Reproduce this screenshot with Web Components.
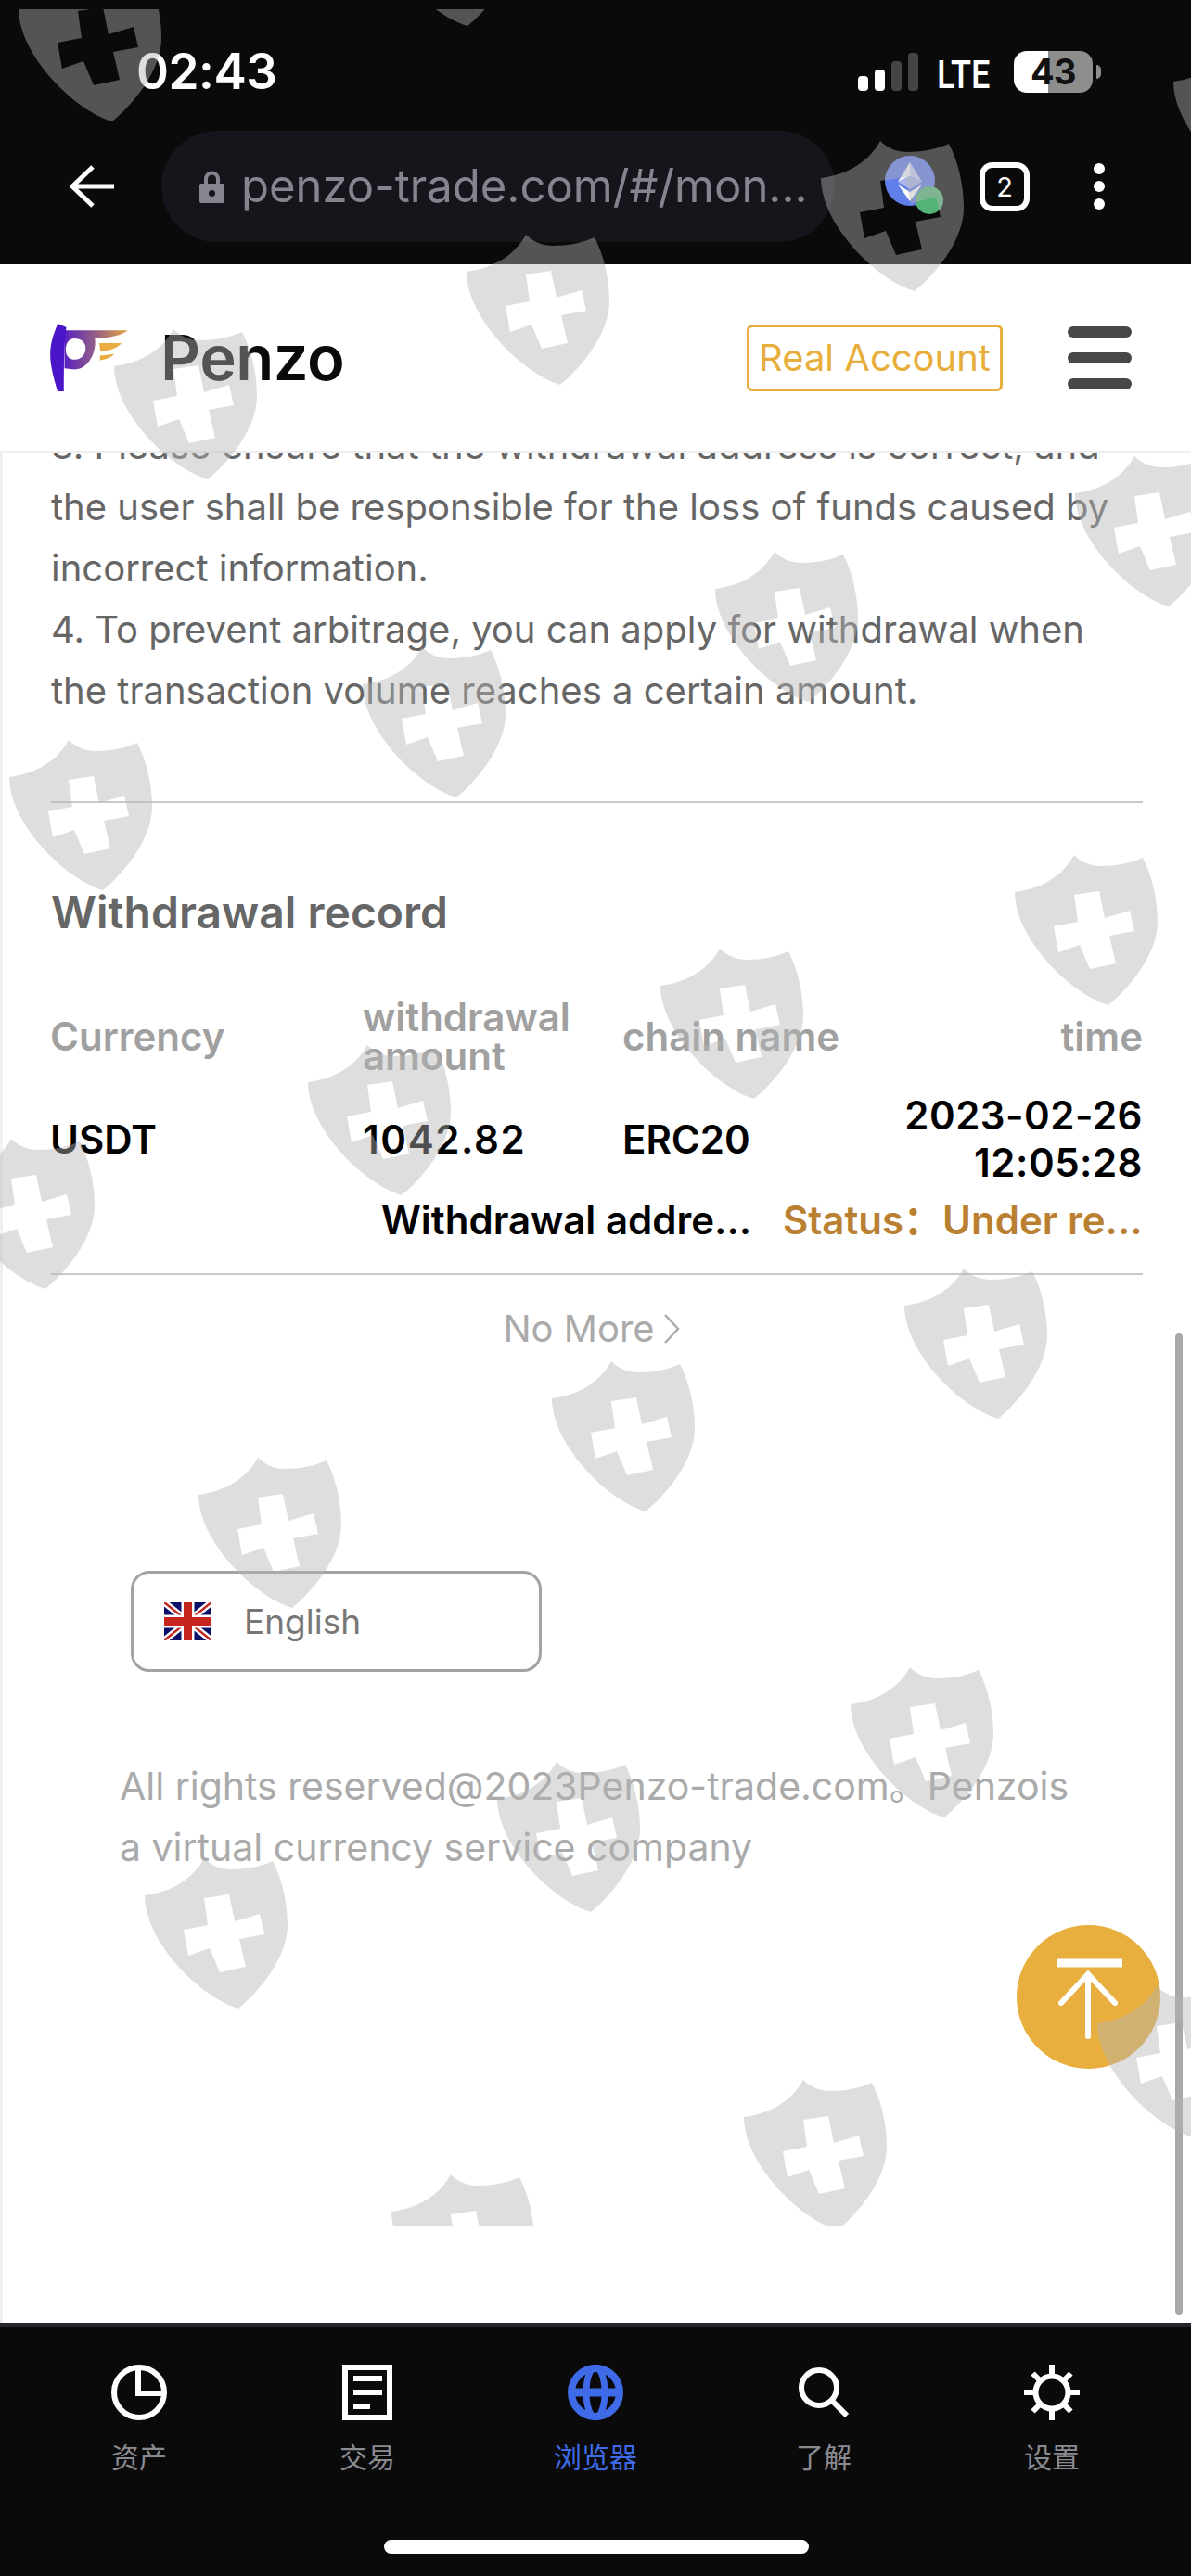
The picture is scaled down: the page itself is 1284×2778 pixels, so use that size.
<!DOCTYPE html>
<html lang="en">
<head>
<meta charset="utf-8">
<title>Penzo</title>
<style>
html,body{margin:0;padding:0;background:#fff;width:1284px;height:2778px;overflow:hidden}
body{font-family:Inter,"Noto Sans CJK SC",sans-serif}
</style>
</head>
<body>
<phone-app>
  <status-bar></status-bar>
  <browser-bar url="penzo-trade.com/#/mon..." tabs="2"></browser-bar>
  <site-header></site-header>
  <page-content>
    <notice-text>3. Please ensure that the withdrawal address is correct, and the user shall be responsible for the loss of funds caused by incorrect information.<br>4. To prevent arbitrage, you can apply for withdrawal when the transaction volume reaches a certain amount.</notice-text>
    <withdrawal-record></withdrawal-record>
    <lang-select>English</lang-select>
    <site-footer>All rights reserved@2023Penzo-trade.com。Penzois<br>a virtual currency service company</site-footer>
  </page-content>
  <tab-bar></tab-bar>
  <back-top></back-top>
  <scroll-thumb></scroll-thumb>
  <watermark-layer></watermark-layer>
</phone-app>
<script>
function def(name, html){
  customElements.define(name, class extends HTMLElement{
    constructor(){super();this.attachShadow({mode:'open'}).innerHTML=typeof html==='function'?html(this):html;}
  });
}
def('phone-app',`<style>:host{display:flex;flex-direction:column;position:relative;width:1284px;height:2778px;overflow:hidden;background:#fff;font-family:Inter,"Noto Sans CJK SC",sans-serif}</style><slot></slot>`);

def('status-bar',`<style>
:host{display:flex;height:141px;flex:none;background:#0a0a0b;color:#fff;position:relative;align-items:flex-start;box-sizing:border-box;padding:49px 0 0 147px}
.time{font:600 53px/56px Inter,sans-serif;letter-spacing:-.5px}
.right{margin-left:auto;display:flex;align-items:flex-end;height:50px;padding-right:106px}
.sig{display:flex;align-items:flex-end;gap:7px;height:41px;margin-bottom:1px}
.sig i{display:block;width:11px;border-radius:4px;background:#fff}
.lte{font:500 43px/44px Roboto,sans-serif;width:62px;margin-left:20px;transform:scaleX(.84);transform-origin:left;white-space:nowrap;margin-bottom:-3px}
.bat{position:relative;width:85px;height:45px;border-radius:14px;margin-left:21px;margin-bottom:-1px;background:linear-gradient(90deg,#fff 0 37px,#8d8d8d 37px);color:#111;font:700 38px/45px Inter,sans-serif;text-align:center;letter-spacing:-.5px}
.nub{position:absolute;right:-9px;top:15px;width:5px;height:15px;border-radius:0 8px 8px 0;background:#8d8d8d}
</style>
<div class="time">02:43</div>
<div class="right">
  <div class="sig"><i style="height:16px"></i><i style="height:23px"></i><i style="height:32px;background:#444"></i><i style="height:41px;background:#444"></i></div>
  <div class="lte">LTE</div>
  <div class="bat">43<span class="nub"></span></div>
</div>`);

def('browser-bar',el=>`<style>
:host{display:flex;flex:none;height:144px;background:#0a0a0b;box-sizing:border-box;padding:0 0 24px 75px;align-items:center}
.back{width:48px;height:46px;flex:none;display:block}
.url{margin-left:51px;width:726px;height:120px;border-radius:60px;background:#15161c;display:flex;align-items:center;padding-left:41px;box-sizing:border-box;color:#84858f;font:400 49px/60px Inter,sans-serif;flex:none;white-space:nowrap}
.url svg{width:27px;height:35px;margin-right:18px;flex:none}
.eth{width:66px;height:66px;margin-left:54px;flex:none;display:block}
.tabs{width:54px;height:53px;box-sizing:border-box;border:6px solid #fff;border-radius:14px;margin-left:36px;color:#fff;font:400 29px/41px Inter,sans-serif;text-align:center;flex:none}
.more{width:12px;height:50px;margin-left:69px;flex:none;display:block}
</style>
<svg class="back" viewBox="0 0 48 46"><path d="M25 2 3 23l22 21M3 23h45" fill="none" stroke="#fff" stroke-width="5"/></svg>
<div class="url"><svg viewBox="0 0 27 35"><path fill="#84858f" d="M5 14V9a8.500 8.500 0 0 1 17 0v5h-4V9a4.500 4.500 0 0 0-9 0v5z"/><path fill="#84858f" fill-rule="evenodd" d="M2 14h23a2 2 0 0 1 2 2v17a2 2 0 0 1-2 2H2a2 2 0 0 1-2-2V16a2 2 0 0 1 2-2zm11.500 7a3.500 3.500 0 1 0 0 7 3.500 3.500 0 0 0 0-7z"/></svg><span>${el.getAttribute('url')}</span></div>
<svg class="eth" viewBox="0 0 66 66"><circle cx="27" cy="27" r="27" fill="#627eea"/><path d="M27 7v15l-13 6z" fill="#f4f5fb"/><path d="M27 7v15l13 6z" fill="#c9d1f4"/><path d="M14 28l13-6 13 6-13 8z" fill="#aab8ee"/><path d="M14 31l13 8 13-8-13 18z" fill="#fff"/><circle cx="48" cy="48" r="15" fill="#54b477"/></svg>
<div class="tabs">${el.getAttribute('tabs')}</div>
<svg class="more" viewBox="0 0 12 50"><circle cx="6" cy="6" r="6" fill="#fff"/><circle cx="6" cy="25" r="6" fill="#fff"/><circle cx="6" cy="44" r="6" fill="#fff"/></svg>`);

def('site-header',`<style>
:host{display:flex;flex:none;height:203px;background:#fff;box-sizing:border-box;padding:0 64px 0 54px;align-items:center;border-bottom:2px solid #eee;color:#0a0a0a}
.logo{width:84px;height:73px;flex:none;display:block}
.name{font:600 67px/78px Inter,sans-serif;margin-left:35px;letter-spacing:-.5px}
.btn{margin-left:auto;width:276px;height:72px;box-sizing:border-box;border:3px solid #e8ae3b;border-radius:6px;color:#e8ae3b;font:400 40px/66px Inter,sans-serif;text-align:center;white-space:nowrap}
.menu{margin-left:70px;width:69px;display:flex;flex-direction:column;gap:16px}
.menu i{display:block;height:12px;border-radius:6px;background:#474747}
</style>
<svg class="logo" viewBox="72 92 250 218"><defs><linearGradient id="g" x1="118" x2="322" y1="0" y2="0" gradientUnits="userSpaceOnUse"><stop offset="0" stop-color="#5a22c0"/><stop offset=".45" stop-color="#8e5a8a"/><stop offset="1" stop-color="#e4a443"/></linearGradient></defs>
<path fill="url(#g)" fill-rule="evenodd" d="M118 114H322C300 132 262 138 216 140C222 192 190 240 150 240L118 236ZM150 140C132 140 122 156 122 176C122 196 134 208 152 208C172 208 186 192 186 170C186 152 170 140 150 140Z"/>
<path fill="#4a14c9" d="M97 92 124 104C116 150 116 250 116 310H96C84 270 72 230 72 190C72 155 84 120 97 92Z"/>
<path fill="#e9ad41" d="M230 155H302C290 170 262 180 234 182ZM232 195 278 190C268 202 250 208 232 210Z"/></svg>
<div class="name">Penzo</div>
<div class="btn">Real Account</div>
<div class="menu"><i></i><i></i><i></i></div>`);

def('page-content',`<style>
:host{display:block;flex:none;height:2017px;overflow:hidden;background:#fff;box-sizing:border-box;border-left:3px solid #f0f0f0}
</style><slot></slot>`);

def('notice-text',`<style>
:host{display:block;margin:-40px 52px 0 52px;font:400 40px/66px Inter,"Noto Sans CJK SC",sans-serif;color:#666;padding-bottom:86px;border-bottom:2px solid #c9c9c9}
</style><slot></slot>`);

def('withdrawal-record',`<style>
:host{display:block;margin:0 52px 0 52px;color:#000;font-family:Inter,"Noto Sans CJK SC",sans-serif}
h2{margin:0;padding-top:91px;font:600 48px/54px Inter,"Noto Sans CJK SC",sans-serif;color:#666}
.grid{display:grid;grid-template-columns:337px 280px 1fr;font:600 42px/42px Inter,"Noto Sans CJK SC",sans-serif;margin:65px 0 0 -1px}
.hd{color:#a0a0a0;align-self:center}
.row{grid-column:1/-1;display:grid;grid-template-columns:337px 280px 1fr;align-items:center;margin-top:17px;line-height:51px}
.more{grid-column:1/-1;display:flex;justify-content:flex-end;margin-top:11px;line-height:51px}
.addr{width:396px;white-space:nowrap}
.st{width:388px;margin-left:37px;color:#b98032;white-space:nowrap}
.line{height:2px;background:#c9c9c9;margin-top:32px}
.nm{display:flex;align-items:center;justify-content:center;gap:9px;color:#aaa;font:400 40px/46px Inter,"Noto Sans CJK SC",sans-serif;margin-top:35px;padding-right:12px}
.nm svg{width:18px;height:32px}
</style>
<h2>Withdrawal record</h2>
<div class="grid">
  <div class="hd">Currency</div><div class="hd">withdrawal<br>amount</div><div class="hd" style="display:flex;justify-content:space-between;grid-column:3"><span>chain name</span><span>time</span></div>
  <div class="row"><div>USDT</div><div style="letter-spacing:1.6px">1042.82</div><div style="display:flex;justify-content:space-between;align-items:center"><span>ERC20</span><span style="text-align:right;letter-spacing:.5px">2023-02-26<br>12:05:28</span></div></div>
  <div class="more"><div class="addr">Withdrawal addre...</div><div class="st">Status：Under re...</div></div>
</div>
<div class="line"></div>
<div class="nm"><span>No More</span><svg viewBox="0 0 18 32"><path d="M2 1l14 15L2 31" fill="none" stroke="#aaa" stroke-width="2.500"/></svg></div>`);

def('lang-select',`<style>
:host{display:flex;align-items:center;width:443px;height:109px;box-sizing:border-box;margin:238px 0 0 138px;border:3px solid #a3a3a3;border-radius:20px;padding-left:33px;color:#777;font:400 37px/46px Inter,sans-serif}
svg{width:51px;height:41px;margin-right:35px;flex:none}
</style>
<svg viewBox="0 0 51 41"><rect width="51" height="41" fill="#0b1166"/><path d="M0 0 51 41M51 0 0 41" stroke="#fff" stroke-width="7"/><path d="M0 0 51 41M51 0 0 41" stroke="#c4261d" stroke-width="2.500"/><path d="M25.500 0v41M0 20.500h51" stroke="#fff" stroke-width="14"/><path d="M25.500 0v41M0 20.500h51" stroke="#c4261d" stroke-width="9"/></svg><slot></slot>`);

def('site-footer',`<style>
:host{display:block;margin:90px 60px 0 126px;font:400 41px/66px Inter,"Noto Sans CJK SC",sans-serif;color:#aaa;white-space:nowrap}
</style><slot></slot>`);

def('tab-item',el=>`<style>
:host{display:flex;flex-direction:column;align-items:center;width:246px;flex:none;color:#8a8b91;font:400 30px/36px "Noto Sans CJK SC",sans-serif}
:host([active]){color:#3f6be8}
.ic{height:60px;display:flex;justify-content:center;margin-bottom:20px}
</style><div class="ic"><slot name="icon"></slot></div><slot></slot>`);

def('tab-bar',`<style>
:host{display:block;position:relative;flex:none;height:273px;background:#0a0a0b;border-top:4px solid #25252d;box-sizing:border-box;padding:41px 27px 0}
.row{display:flex}
.home{position:absolute;left:414px;bottom:24px;width:458px;height:15px;border-radius:8px;background:#fff}
svg{display:block}
</style>
<div class="row">
<tab-item><svg slot="icon" width="60" height="60" viewBox="0 0 60 60" fill="none" stroke="#fff" stroke-width="6"><circle cx="30" cy="30" r="27"/><path d="M29 3v28h28"/></svg>资产</tab-item>
<tab-item><svg slot="icon" width="54" height="60" viewBox="0 0 54 60" fill="none" stroke="#fff" stroke-width="6"><path d="M3 3h48v54H3z"/><path d="M12 15h31M12 30h31M12 45h18"/></svg>交易</tab-item>
<tab-item active><svg slot="icon" width="60" height="60" viewBox="0 0 60 60" fill="none" stroke="#3f6be8"><circle cx="30" cy="30" r="26" stroke-width="8"/><ellipse cx="30" cy="30" rx="10" ry="27" stroke-width="7"/><path d="M3 30h54" stroke-width="9"/></svg>浏览器</tab-item>
<tab-item><svg slot="icon" width="54" height="60" viewBox="0 0 54 60" fill="none" stroke="#fff" stroke-width="6"><circle cx="22" cy="25" r="19"/><path d="M36 39l16 16"/></svg>了解</tab-item>
<tab-item><svg slot="icon" width="60" height="60" viewBox="0 0 60 60" fill="none" stroke="#fff" stroke-width="6"><circle cx="30" cy="30" r="17.500"/><path d="M30 0v13M30 47v13M0 30h13M47 30h13M9.500 9.500l8.500 8.500M50.500 9.500 42 18M9.500 50.500 18 42M50.500 50.500 42 42"/></svg>设置</tab-item>
</div>
<div class="home"></div>`);

def('back-top',`<style>
:host{display:block;position:absolute;left:1096px;top:2076px;width:155px;height:155px;border-radius:50%;background:#e8af3f}
svg{display:block}
</style>
<svg width="155" height="155" viewBox="0 0 155 155" fill="none" stroke="#fff"><path d="M44 41h70" stroke-width="9"/><path d="M77 120V56M48 84 77 53l29 31" stroke-width="6" stroke-linecap="round"/></svg>`);

def('scroll-thumb',`<style>
:host{display:block;position:absolute;left:1267px;top:1438px;width:8px;height:1058px;border-radius:4px;background:#a8a8a8}
</style>`);

const SHIELDS=[[20,-31],[403,-134],[1265,48],[885,152],[503,253],[123,355],[1159,492],[771,595],[391,698],[10,798],[1094,922],[712,1023],[332,1127],[-52,1228],[975,1368],[595,1468],[214,1572],[917,1798],[536,1900],[156,2004],[1183,2142],[802,2243],[422,2345]];
def('watermark-layer',`<style>
:host{display:block;position:absolute;left:0;top:10px;width:1284px;height:2391px;overflow:hidden;pointer-events:none}
svg{position:absolute;width:154px;height:162px;overflow:visible}
</style>`+SHIELDS.map(([x,y])=>`<svg style="left:${x}px;top:${y-10}px" viewBox="0 0 154 162"><path fill="rgb(180,180,180)" fill-opacity=".44" fill-rule="evenodd" d="M64 0C72 8 82 12 93 12C109 12 125 9 138 3C148 22 154 48 154 72C154 108 122 145 101 162C60 150 0 90 0 40C30 36 52 22 64 0ZM64 43 91 39 97 68 124 60 129 82 102 87 109 117 81 123 70 97 47 105 42 77 68 72Z"/></svg>`).join(''));
</script>
</body>
</html>
